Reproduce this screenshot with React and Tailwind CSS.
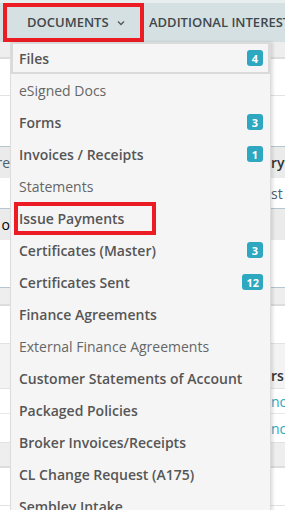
const items = [
  { label: "Files", bold: true, badge: "4", focused: true },
  { label: "eSigned Docs" },
  { label: "Forms", bold: true, badge: "3" },
  { label: "Invoices / Receipts", bold: true, badge: "1" },
  { label: "Statements" },
  { label: "Issue Payments", bold: true, marked: true },
  { label: "Certificates (Master)", bold: true, badge: "3" },
  { label: "Certificates Sent", bold: true, badge: "12" },
  { label: "Finance Agreements", bold: true },
  { label: "External Finance Agreements" },
  { label: "Customer Statements of Account", bold: true },
  { label: "Packaged Policies", bold: true },
  { label: "Broker Invoices/Receipts", bold: true },
  { label: "CL Change Request (A175)", bold: true },
  { label: "Sembley Intake", bold: true },
];

// table rows peeking out behind the menu
const rows = [
  { h: "h-[17px]", cls: "bg-[#eeeeee] border-b-2 border-[#dddddd]" },
  { h: "h-[37px]", cls: "bg-white border-b border-[#e2e2e2]" },
  { h: "h-[51px]", cls: "bg-white border-b border-[#b4c6cf]" },
  { h: "h-[31px]", cls: "bg-[#ebebeb]", left: "re", right: "ry", caret: true, strong: true },
  { h: "h-[31px]", cls: "bg-white border-b border-[#b4c6cf]", right: "st" },
  { h: "h-[31px]", cls: "bg-[#ebebeb]", left: "o", dark: true },
  { h: "h-[48px]", cls: "bg-white border-b border-[#b4c6cf]" },
  { h: "h-[18px]", cls: "bg-[#eeeeee] border-b-2 border-[#dddddd]" },
  { h: "h-[38px]", cls: "bg-white border-b border-[#e2e2e2]" },
  { h: "h-[45px]", cls: "bg-[#f3f3f3] border-b border-[#e2e2e2]", right: "rs", strong: true, alignEnd: true },
  { h: "h-[25px]", cls: "bg-white border-b border-[#e8e8e8]", right: "no", link: true },
  { h: "h-[29px]", cls: "bg-white border-b border-[#e2e2e2]", right: "no", link: true },
  { h: "h-[25px]", cls: "bg-[#eeeeee] border-b-2 border-[#dddddd]" },
  { h: "h-[38px]", cls: "bg-white border-b border-[#e2e2e2]" },
  { h: "h-[20px]", cls: "bg-white" },
];

function Badge({ value }) {
  return (
    <span className="flex h-[16px] min-w-[16px] items-center justify-center rounded-[3px] bg-[#2ea7c0] px-[4px] text-[11px] font-bold leading-none text-white">
      {value}
    </span>
  );
}

export default function App() {
  return (
    <div className="relative h-[510px] w-[285px] overflow-hidden bg-white font-['Open_Sans',sans-serif]">
      <div className="h-[3px] bg-[#e8edee]" />
      <nav className="flex h-[39px] items-stretch bg-[#d5e0e2] text-[13px] font-semibold uppercase text-[#41484b]">
        <div className="ml-[3px] flex w-[141px] shrink-0 items-center border-4 border-[#ec1c24] pl-[20px]">
          <span>Documents</span>
          <svg className="ml-[8px] mt-[1px]" width="8" height="6" viewBox="0 0 8 6" fill="none">
            <path d="M1 1.5 4 4.5 7 1.5" stroke="#555" strokeWidth="1.3" />
          </svg>
        </div>
        <div className="ml-[5px] flex shrink-0 items-center whitespace-nowrap">Additional Interest</div>
      </nav>

      <div className="flex flex-col">
        {rows.map((r, i) => (
          <div key={i} className={`flex ${r.h} ${r.cls} ${r.alignEnd ? "items-end pb-[2px]" : "items-center"} text-[14px]`}>
            <div className="flex w-[10px] justify-end overflow-hidden whitespace-nowrap">
              {r.left ? (
                <span className={r.dark ? "text-black" : "text-[#4b6170]"}>{r.left}</span>
              ) : null}
            </div>
            <div className="ml-auto flex w-[14px] items-center overflow-hidden whitespace-nowrap">
              {r.right ? (
                <span className={r.link ? "text-[#2ea7c0]" : r.strong ? "font-semibold text-[#333]" : "text-[#4b6170]"}>
                  {r.right}
                </span>
              ) : null}
              {r.caret ? <span className="ml-[2px] text-[9px] text-[#f0a030]">▼</span> : null}
            </div>
          </div>
        ))}
      </div>

      <ul className="absolute left-[10px] top-[42px] w-[261px] border-x border-[#dcdcdc] bg-[#f5f5f5] text-[14px] shadow-[2px_0_3px_rgba(0,0,0,0.12)]">
        {items.map((it) => (
          <li
            key={it.label}
            className={`flex h-[32px] items-center justify-between whitespace-nowrap ${
              it.focused ? "border-2 border-[#dadada] pl-[6px] pr-[5px]" : "pl-[8px] pr-[7px]"
            } ${it.bold ? "font-semibold text-[#565656]" : "text-[#666]"}`}
          >
            {it.marked ? (
              <span className="-ml-[5px] flex h-[33px] w-[142px] items-center border-4 border-[#ec1c24] pl-px">
                {it.label}
              </span>
            ) : (
              <span>{it.label}</span>
            )}
            {it.badge ? <Badge value={it.badge} /> : null}
          </li>
        ))}
      </ul>
    </div>
  );
}
